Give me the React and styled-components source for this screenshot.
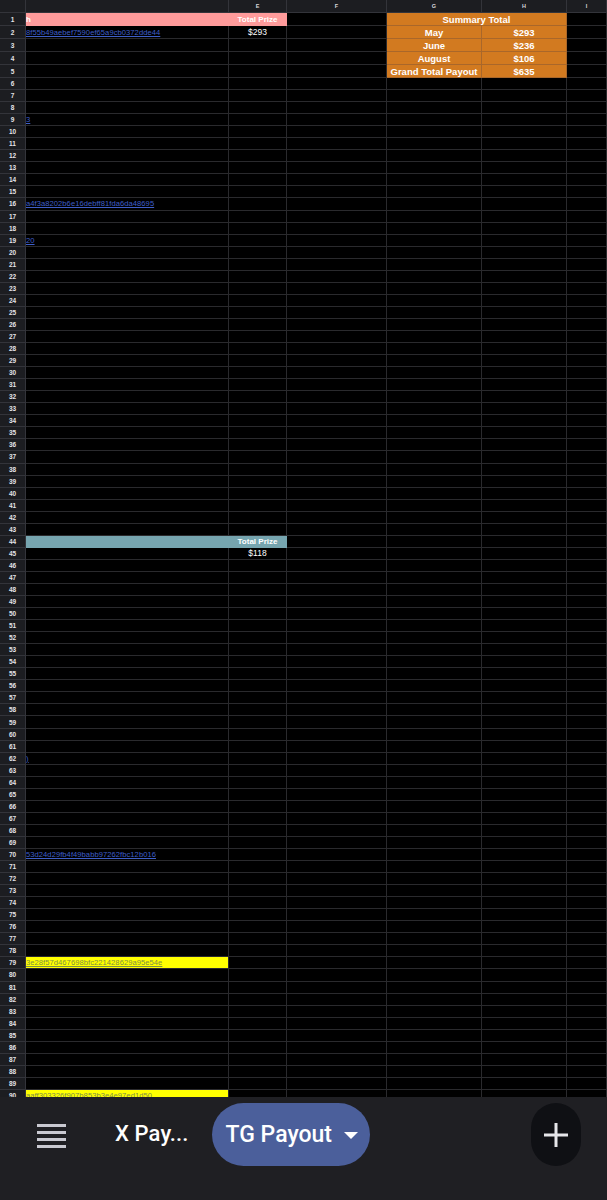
import React from 'react';
import styled, { createGlobalStyle } from 'styled-components';

const GlobalStyle = createGlobalStyle`
  html, body {
    margin: 0;
    padding: 0;
    background: #000;
  }
  body {
    font-family: "Liberation Sans", Arial, sans-serif;
  }
`;

const COLS = '26px 203px 58px 100px 95px 85px 1fr';

const Screen = styled.div`
  width: 607px;
  height: 1200px;
  display: flex;
  flex-direction: column;
  background: #000;
  overflow: hidden;
`;

const Sheet = styled.div`
  height: 1097px;
  overflow: hidden;
  flex-shrink: 0;
`;

const HeaderRow = styled.div`
  display: grid;
  grid-template-columns: ${COLS};
  height: 13px;
  background: #1c1d21;
`;

const HeaderCell = styled.div`
  border-right: 1px solid #33343a;
  border-bottom: 1px solid #33343a;
  color: #d8d8dc;
  font-size: 5.5px;
  font-weight: bold;
  display: flex;
  align-items: center;
  justify-content: center;
`;

// the first rows are a bit taller, the summary font pushes them
const Row = styled.div`
  display: grid;
  grid-template-columns: ${COLS};
  height: ${(p) => (p.$tall ? 13 : 12.05)}px;
`;

const RowNum = styled.div`
  background: #1c1d21;
  border-bottom: 1px solid #33343a;
  border-right: 1px solid #33343a;
  color: #e4e4e8;
  font-size: 6.5px;
  font-weight: bold;
  display: flex;
  align-items: center;
  justify-content: center;
  box-sizing: border-box;
`;

const Cell = styled.div`
  box-sizing: border-box;
  background: ${(p) => p.$bg || '#000'};
  border-bottom: 1px solid ${(p) => p.$line || '#2a2a2d'};
  border-right: 1px solid ${(p) => p.$vline || p.$line || '#2a2a2d'};
  color: #fff;
  font-size: ${(p) => p.$size || 8}px;
  font-weight: ${(p) => (p.$bold ? 'bold' : 'normal')};
  display: flex;
  align-items: center;
  justify-content: ${(p) => (p.$center ? 'center' : 'flex-start')};
  white-space: nowrap;
  overflow: hidden;
  grid-column: ${(p) => p.$span || 'auto'};
`;

const Link = styled.span`
  color: ${(p) => p.$color || '#3f5fc8'};
  text-decoration: underline;
  font-size: 7.6px;
  letter-spacing: 0.05px;
`;

const BottomBar = styled.div`
  flex: 1;
  background: #1f1f23;
  display: flex;
  align-items: flex-start;
  padding-top: 6px;
  box-sizing: border-box;
`;

const MenuButton = styled.div`
  width: 29px;
  margin: 21px 0 0 37px;
  display: flex;
  flex-direction: column;
  gap: 4px;
`;

const MenuLine = styled.div`
  height: 3px;
  background: #c9c9d1;
`;

const TabLabel = styled.div`
  font-family: Roboto, "Liberation Sans", sans-serif;
  font-weight: 500;
  font-size: 22px;
  color: #fff;
  margin: 18px 0 0 49px;
  letter-spacing: 0.1px;
`;

const ActiveTab = styled.div`
  margin-left: 23px;
  height: 63px;
  width: 158px;
  border-radius: 32px;
  background: #4b5f9b;
  display: flex;
  align-items: center;
  padding-left: 14px;
  box-sizing: border-box;
  font-family: Roboto, "Liberation Sans", sans-serif;
  font-weight: 500;
  font-size: 23px;
  color: #fff;
  gap: 12px;
`;

const Caret = styled.div`
  width: 0;
  height: 0;
  border-left: 7px solid transparent;
  border-right: 7px solid transparent;
  border-top: 7px solid #fff;
  margin-top: 2px;
`;

const AddButton = styled.div`
  margin-left: auto;
  margin-right: 26px;
  width: 50px;
  height: 63px;
  border-radius: 25px;
  background: #0f1014;
  display: flex;
  align-items: center;
  justify-content: center;
`;

const ORANGE = '#d27a20';
const ORANGE_LINE = '#a9672a';
const PINK = '#ff9b9b';
const TEAL = '#76a5af';
const YELLOW = '#ffff00';

const links = {
  2: '8f55b49aebef7590ef65a9cb0372dde44',
  9: '3',
  16: 'a4f3a8202b6e16debff81fda6da48695',
  19: '20',
  62: ')',
  70: '53d24d29fb4f49babb97262fbc12b016',
  79: '3e28f57d467698bfc221428629a95e54e',
  90: 'aaff303326f907b853b3e4e97ed1d50',
};

const summary = {
  2: ['May', '$293'],
  3: ['June', '$236'],
  4: ['August', '$106'],
  5: ['Grand Total Payout', '$635'],
};

function SheetRow({ n }) {
  const yellow = n === 79 || n === 90;
  const band = n === 1 ? PINK : n === 44 ? TEAL : null;

  const dCell = band ? (
    <Cell $bg={band} $line={band} $bold>
      {n === 1 ? 'h' : ''}
    </Cell>
  ) : (
    <Cell $bg={yellow ? YELLOW : null}>
      {links[n] && <Link $color={yellow ? '#7b8d46' : null}>{links[n]}</Link>}
    </Cell>
  );

  let eCell;
  if (band) {
    eCell = (
      <Cell $bg={band} $line={band} $bold $center>
        Total Prize
      </Cell>
    );
  } else if (n === 2 || n === 45) {
    eCell = (
      <Cell $center $size={8.5}>
        {n === 2 ? '$293' : '$118'}
      </Cell>
    );
  } else {
    eCell = <Cell />;
  }

  let summaryCells;
  if (n === 1) {
    summaryCells = (
      <Cell $span="span 2" $bg={ORANGE} $line={ORANGE_LINE} $bold $center $size={9.5}>
        Summary Total
      </Cell>
    );
  } else if (summary[n]) {
    summaryCells = (
      <>
        <Cell $bg={ORANGE} $line={ORANGE_LINE} $bold $center $size={9.5}>
          {summary[n][0]}
        </Cell>
        <Cell $bg={ORANGE} $line={ORANGE_LINE} $bold $center $size={9.5}>
          {summary[n][1]}
        </Cell>
      </>
    );
  } else {
    summaryCells = (
      <>
        <Cell />
        <Cell />
      </>
    );
  }

  return (
    <Row $tall={n <= 5}>
      <RowNum>{n}</RowNum>
      {dCell}
      {eCell}
      <Cell />
      {summaryCells}
      <Cell />
    </Row>
  );
}

export default function App() {
  const rows = Array.from({ length: 90 }, (_, i) => i + 1);
  return (
    <Screen>
      <GlobalStyle />
      <Sheet>
        <HeaderRow>
          <HeaderCell />
          <HeaderCell />
          <HeaderCell>E</HeaderCell>
          <HeaderCell>F</HeaderCell>
          <HeaderCell>G</HeaderCell>
          <HeaderCell>H</HeaderCell>
          <HeaderCell>I</HeaderCell>
        </HeaderRow>
        {rows.map((n) => (
          <SheetRow key={n} n={n} />
        ))}
      </Sheet>
      <BottomBar>
        <MenuButton>
          <MenuLine />
          <MenuLine />
          <MenuLine />
          <MenuLine />
        </MenuButton>
        <TabLabel>X Pay...</TabLabel>
        <ActiveTab>
          TG Payout
          <Caret />
        </ActiveTab>
        <AddButton>
          <svg width="26" height="26" viewBox="0 0 26 26">
            <path d="M13 1v24M1 13h24" stroke="#e6e6ea" strokeWidth="3" />
          </svg>
        </AddButton>
      </BottomBar>
    </Screen>
  );
}
